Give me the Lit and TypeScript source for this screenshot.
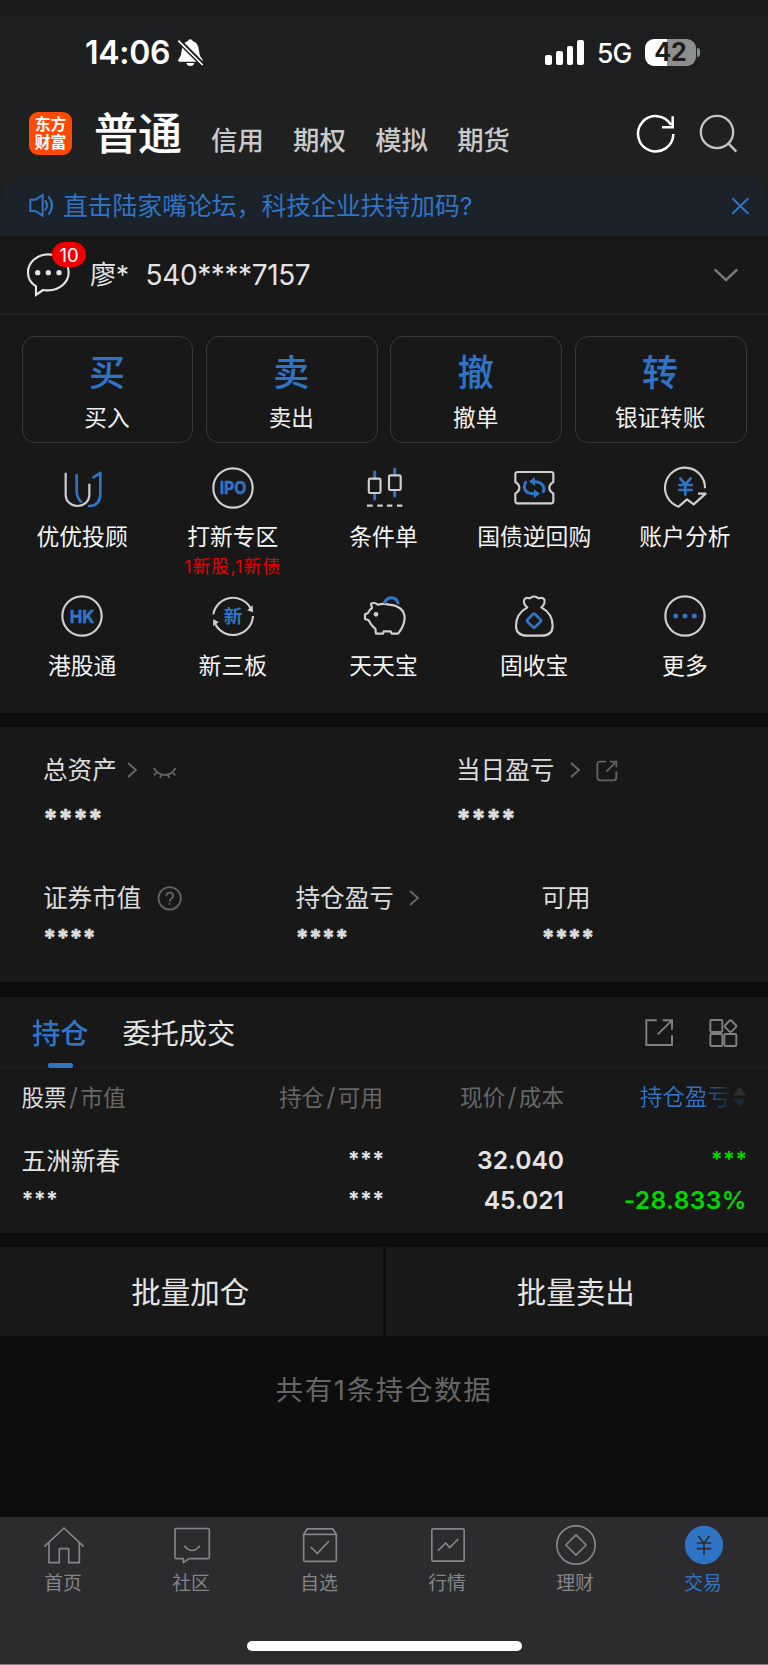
import { LitElement, html, css, svg } from "lit";
import { customElement } from "lit/decorators.js";

const ic = (size: number, body: unknown, cls = "") =>
  html`<svg class="ic ${cls}" width=${size} height=${size} viewBox="0 0 ${size * 3} ${size * 3}">${body}</svg>`;

const quick = [
  { big: "买", label: "买入" },
  { big: "卖", label: "卖出" },
  { big: "撤", label: "撤单" },
  { big: "转", label: "银证转账" },
];

const yen = svg`<path class="b" stroke-width="8" d="M61 46L76 65L92 46M58 66H95M58 81H95M76 65V95"/>`;

const tools = [
  {
    label: "优优投顾",
    icon: svg`<path class="w" d="M26 29V96a35.500 33 0 0 0 71 0V62"/><path class="b" stroke-width="8" d="M59 36V84q1 22 13 32M109 43L130 30V92q0 36-34 37"/>`,
  },
  {
    label: "打新专区",
    note: "1新股,1新债",
    icon: svg`<circle class="w" cx="75" cy="75" r="59"/><text class="t" x="75" y="94" textLength="80" lengthAdjust="spacingAndGlyphs" font-size="53">IPO</text>`,
  },
  {
    label: "条件单",
    icon: svg`<path class="b" stroke-width="9" d="M47 27V46M47 91V108M107 18V36M107 83V99"/><rect class="w" x="29.500" y="47" width="35" height="43" rx="4"/><rect class="w" x="90" y="37" width="35" height="44" rx="4"/><path class="w" d="M24 128H41M55 128H71M84 128H100M114 128H130"/>`,
  },
  {
    label: "国债逆回购",
    icon: svg`<path class="w" d="M26 27H126q7 0 7 7V57q-12 7-12 17t12 17V114q0 7-7 7H26q-7 0-7-7V91q12-7 12-17T19 57V34q0-7 7-7z"/><path class="b" stroke-width="9" d="M50 58Q41 73 51 84Q58 92 74 92M76 56Q95 56 102 68Q107 76 103 86"/><path class="f" d="M75 79L93 92L75 106zM78 42L60 55L78 69z"/>`,
  },
  {
    label: "账户分析",
    icon: svg`<path class="w" d="M135 76A60 60 0 1 0 56 131L81 109L101 124L137 92H114"/>${yen}`,
  },
  {
    label: "港股通",
    icon: svg`<circle class="w" cx="75" cy="75" r="59"/><text class="t" x="75" y="95" textLength="74" lengthAdjust="spacingAndGlyphs" font-size="54">HK</text>`,
  },
  {
    label: "新三板",
    icon: svg`<path class="w" d="M16 70A60 60 0 0 1 128 52M135 75A60 60 0 0 1 22 100"/><path class="wf" d="M134 43L135 64L118 58zM15 105L16 84L32 94z"/><text class="t thin" x="75" y="96" font-size="56">新</text>`,
  },
  {
    label: "天天宝",
    icon: svg`<path class="w" d="M36 38Q48 33 56 41Q72 36 90 41Q137 46 137 82Q135 106 117 128H98L95 121H74L72 128H51L49 113Q38 106 29 88L18 84V70L27 66Q30 57 39 51z"/><circle class="wf" cx="51" cy="70" r="7"/><path class="b" stroke-width="9" d="M77 34Q84 20 98 20Q112 20 117 36"/>`,
  },
  {
    label: "固收宝",
    icon: svg`<path class="w" d="M55 49Q41 38 46 25Q52 18 62 22Q75 11 89 22Q100 18 106 25Q110 38 97 49Q131 68 131 104Q131 134 97 134H55Q21 134 21 104Q21 68 55 49z"/><rect class="b" stroke-width="8" x="59" y="73" width="32" height="32" rx="5" transform="rotate(45 75 89)"/>`,
  },
  {
    label: "更多",
    icon: svg`<circle class="w" cx="75" cy="75" r="59"/><g class="f"><circle cx="47" cy="75" r="7.500"/><circle cx="75" cy="75" r="7.500"/><circle cx="103" cy="75" r="7.500"/></g>`,
  },
];

const nav = [
  { label: "首页", icon: svg`<path d="M1 65L60 9L119 65M15 54V113H46V71H74V113H106V54"/>` },
  { label: "社区", icon: svg`<path d="M13 10.500H108q4 0 4 4V97q0 4-4 4H51L34 113V101H13q-4 0-4-4V14.500q0-4 4-4zM37 62q23 29 47 0"/>` },
  { label: "自选", icon: svg`<path d="M22 11.500H98L109 28V105q0 4-4 4H15q-4 0-4-4V28zM11 28H109M32 66L52 85L87 48"/>` },
  { label: "行情", icon: svg`<rect x="11.500" y="11.500" width="97" height="97" rx="4"/><path d="M30 77L53 54L65 68L91 42"/>` },
  { label: "理财", icon: svg`<circle cx="60" cy="60" r="57.500"/><path d="M60 29.500L90.500 60L60 90.500L29.500 60z"/>` },
  { label: "交易", active: true, icon: svg`<circle class="disc" cx="60" cy="60" r="57.500"/><path class="dark" d="M43 33L60 55L76 33M38 54H82M38 71H82M60 55V90"/>` },
];

const chevron = html`<svg class="ic chev" width="11" height="18" viewBox="0 0 33 54"><path d="M3 6L27 27L3 48"/></svg>`;

@customElement("app-root")
export class AppRoot extends LitElement {
  static styles = css`
    :host { display: block; width: 768px; height: 1665px; overflow: hidden; background: #0d0d0d; color: #e4e4e4; font-family: Inter, "Noto Sans CJK SC", sans-serif; line-height: 1; white-space: nowrap; }
    * { box-sizing: border-box; }
    .ic { display: block; flex: none; fill: none; overflow: visible; }
    .top { height: 236px; background: linear-gradient(#1c1d1f 0, #1e1f20 90px, #212121 175px, #1b1b1b 205px); }
    .status { height: 104px; display: flex; align-items: center; padding: 0 68px 0 85px; color: #fff; }
    .time { width: 91px; font-size: 32px; font-weight: 600; letter-spacing: -0.3px; margin-top: 2px; }
    .bell { margin-top: 1px; }
    .bell path { fill: #fff; }
    .bell .cut { stroke: #1d1e20; stroke-width: 15; }
    .bell .slash { stroke: #fff; stroke-width: 5; }
    .bars { display: flex; align-items: flex-end; gap: 4px; margin: 0 13px 0 auto; }
    .bars i { width: 6.700px; border-radius: 2px; background: #fff; }
    .b1 { height: 10px; } .b2 { height: 14px; } .b3 { height: 19px; } .b4 { height: 25px; }
    .net { font-size: 26.500px; font-weight: 500; width: 48px; letter-spacing: -0.8px; margin-top: 3px; }
    .batt { width: 51px; height: 27px; border-radius: 9px; background: linear-gradient(90deg, #fff 0 43%, #8e8e8e 43%); color: #1d1e20; font-size: 25px; font-weight: 700; display: flex; align-items: center; justify-content: center; }
    .nub { width: 3px; height: 9px; margin-left: 1px; border-radius: 0 4px 4px 0; background: #8e8e8e; }
    .head { height: 71px; display: flex; align-items: flex-start; padding: 0 29px 0 29px; }
    .logo { width: 43px; height: 43px; margin-top: 8px; border-radius: 9px; background: #ff4a05; color: #fff; font-size: 15.800px; font-weight: 700; line-height: 18px; text-align: center; padding-top: 3.500px; }
    .title { margin: 8px 29px 0 22px; font-size: 44px; font-weight: 500; -webkit-text-stroke: 0.200px #fff; color: #fff; }
    .seg { font-size: 26.400px; font-weight: 500; color: #c9c9c9; margin: 23px 29.300px 0 0; }
    .acts { display: flex; gap: 23px; margin: 10px 0 0 auto; }
    .acts path, .acts circle { stroke: #fff; stroke-width: 7.500; }
    .acts .dim path, .acts .dim circle { stroke: #c4c4c4; stroke-width: 7; }
    .banner { height: 61px; border-radius: 28px 28px 0 0; background: #1c222a; color: #2f74c5; display: flex; align-items: center; padding: 0 18px 0 28.500px; font-size: 24.800px; }
    .banner span { margin: 1px auto 0 9.500px; }
    .banner path { stroke: #2f74c5; stroke-width: 6; }
    .panel { background: #181818; }
    .acct { height: 79px; border-bottom: 2px solid #232323; display: flex; align-items: center; padding: 0 30px 0 25px; }
    .chat { position: relative; width: 65px; height: 48px; }
    .chat .ic { margin-top: 1px; }
    .chat path { stroke: #e4e4e4; stroke-width: 6.500; }
    .chat circle { fill: #e4e4e4; }
    .badge { position: absolute; left: 27px; top: -8.500px; width: 34px; height: 25px; border-radius: 13px; background: #ee0000; color: #fff; font-size: 18.500px; line-height: 26px; text-align: center; }
    .who { font-size: 26px; margin-top: 1.500px; } .num { font-size: 28px; letter-spacing: -0.380px; margin: 1.500px auto 0 16.500px; }
    .down path { stroke: #777; stroke-width: 7.500; }
    .quick { display: grid; grid-template-columns: repeat(4, 1fr); gap: 12.500px; padding: 21px 21.500px 0; height: 128px; }
    .card { border: 1.500px solid #383838; border-radius: 13px; display: flex; flex-direction: column; align-items: center; padding: 18px 1px 0 0; color: #f0f0f0; font-size: 22.600px; }
    .big { font-size: 36px; font-weight: 500; -webkit-text-stroke: 0.200px #2f74c5; color: #2f74c5; margin-bottom: 15.500px; }
    .tools { display: grid; grid-template-columns: repeat(5, 1fr); grid-template-rows: 128.500px auto; padding: 19.500px 7.500px 0 7px; height: 270px; }
    .tool { display: flex; flex-direction: column; align-items: center; font-size: 22.800px; color: #f4f4f4; }
    .tool .ic { margin-bottom: 13.500px; }
    .tool > span { margin-right: 0.500px; }
    .note { color: #e60000; font-size: 17.800px; margin-top: 9px; letter-spacing: 1.150px; }
    .w { stroke: #cfcfcf; stroke-width: 6.500; stroke-linejoin: round; }
    .b { stroke: #2f74c5; stroke-linecap: round; stroke-linejoin: round; }
    .f, .t { fill: #2f74c5; } .wf { fill: #cfcfcf; }
    .t { font-weight: 700; text-anchor: middle; stroke: #2f74c5; stroke-width: 1.500; stroke-linejoin: round; }
    .t.thin { stroke: none; }
    .assets { margin-top: 14px; height: 255px; padding: 30.500px 0 0 43px; font-size: 24.600px; color: #dcdcdc; }
    .row { display: grid; }
    .r1 { grid-template-columns: 413px 1fr; height: 128px; }
    .r2 { grid-template-columns: 252.500px 246px 1fr; }
    .lab { display: flex; align-items: center; height: 26px; }
    .chev { margin-left: 10px; margin-top: -1px; }
    .gap .chev { margin-left: 15.500px; }
    .chev path { stroke: #6a6a6a; stroke-width: 5.500; }
    .gray path, .gray circle { stroke: #626262; stroke-width: 5.500; }
    .eye { margin-left: 14px; } .exp { margin-left: 15.500px; } .help { margin-left: 16px; margin-top: -1px; }
    .s1 { font-size: 26px; font-weight: 800; letter-spacing: -0.200px; margin-top: 22px; -webkit-text-stroke: 0.500px #dcdcdc; }
    .s2 { font-size: 23px; font-weight: 800; letter-spacing: -0.250px; margin-top: 15px; -webkit-text-stroke: 0.500px #dcdcdc; }
    .hold { margin-top: 15px; height: 236px; }
    .tabs { height: 71px; border-bottom: 1.500px solid #212121; display: flex; align-items: stretch; padding: 0 29.500px 0 32px; font-size: 28.200px; }
    .tab { margin-right: 34px; height: 71px; display: flex; flex-direction: column; align-items: center; justify-content: space-between; padding-top: 22.500px; }
    .tab.on { color: #2f74c5; font-weight: 500; }
    .tab i { width: 25px; height: 5px; border-radius: 2px; background: #2f74c5; }
    .tact { display: flex; gap: 34.500px; margin: 20.500px 0 0 auto; }
    .tact path, .tact rect { stroke: #808080; stroke-width: 5.800; }
    .cols { display: grid; grid-template-columns: 200px 161.500px 181px 182px; padding: 0 21.500px; align-items: center; text-align: right; }
    .cols > :first-child { text-align: left; }
    .th { height: 58px; font-size: 22.600px; color: #666; }
    .th em { font-style: normal; color: #dcdcdc; }
    .th s { text-decoration: none; margin: 0 2.300px; font-size: 25px; }
    .sort { display: flex; justify-content: flex-end; align-items: center; gap: 3px; }
    .sort span { background: linear-gradient(90deg, #2f74c5 68%, #1b2634); -webkit-background-clip: text; background-clip: text; color: transparent; }
    .td { height: 40px; font-size: 24.600px; font-weight: 600; }
    .nm { font-size: 24.700px; font-weight: 400; padding-top: 1px; }
    .st { font-size: 21.500px; font-weight: 700; letter-spacing: 0.200px; padding-bottom: 2px; }
    .st:not(:first-child) { margin-right: -1.500px; }
    .gr { color: #00d800; }
    .pct { letter-spacing: 0.350px; margin-right: -0.800px; }
    .tr { padding-top: 14.500px; }
    .batch { margin-top: 14px; display: grid; grid-template-columns: 1fr 1fr; gap: 3px; height: 89px; font-size: 29.500px; }
    .batch div { background: #181818; display: flex; align-items: center; justify-content: center; padding: 2px 2px 0 0; }
    .sum { height: 181px; padding-top: 41px; text-align: center; font-size: 27.500px; letter-spacing: 1.650px; color: #666; }
    .nav { height: 148px; background: #2c2c2e; border-bottom: 1px solid #808084; display: flex; flex-direction: column; align-items: center; }
    .items { align-self: stretch; display: grid; grid-template-columns: repeat(6, 1fr); height: 124px; padding-top: 8px; }
    .item { display: flex; flex-direction: column; align-items: center; gap: 9.500px; color: #858589; font-size: 18.800px; }
    .item > span { margin-right: 2px; }
    .item path, .item rect, .item circle { stroke: #858589; stroke-width: 5; stroke-linejoin: round; }
    .item.on { color: #2f74c5; }
    .item .disc { fill: #2f74c5; stroke: none; } .item .dark { stroke: #2c2c2e; }
    .bar { width: 275px; height: 9.500px; border-radius: 5px; background: #fff; }
  `;

  render() {
    return html`
      <div class="top">
        <div class="status">
          <span class="time">14:06</span>
          ${ic(29, svg`<path d="M43 4Q49 4 50 9Q68 15 69 38Q70 54 79 63Q82 71 76 71H9Q4 69 8 63Q16 54 17 38Q18 15 36 9Q37 4 43 4zM31 75H55Q53 84 43 84T31 75z"/><path class="cut" d="M4 4L84 84"/><path class="slash" d="M7 8L80 81"/>`, "bell")}
          <div class="bars"><i class="b1"></i><i class="b2"></i><i class="b3"></i><i class="b4"></i></div>
          <span class="net">5G</span>
          <span class="batt">42</span><span class="nub"></span>
        </div>
        <div class="head">
          <div class="logo">东方<br />财富</div>
          <div class="title">普通</div>
          ${["信用", "期权", "模拟", "期货"].map((t) => html`<div class="seg">${t}</div>`)}
          <div class="acts">
            ${ic(40, svg`<path d="M112 60A53 53 0 1 1 105 33M110 7V40H78"/>`)}
            ${ic(40, svg`<circle cx="54" cy="54" r="48.500"/><path d="M88 88L112 113"/>`, "dim")}
          </div>
        </div>
        <div class="banner">
          ${ic(25, svg`<path d="M4 20H19L41 6V68L19 54H4zM48 22Q60 37 48 52M58 10Q80 37 58 65"/>`)}
          <span>直击陆家嘴论坛，科技企业扶持加码?</span>
          ${ic(20, svg`<path d="M7 7L55 53M55 7L7 53"/>`)}
        </div>
      </div>
      <div class="panel">
        <div class="acct">
          <div class="chat">
            ${ic(48, svg`<path d="M33 103Q9 88 9 62A61 54 0 1 1 70 115Q62 116 54 114L33 129z"/><circle cx="38" cy="62" r="8"/><circle cx="70" cy="62" r="8"/><circle cx="102" cy="62" r="8"/>`)}
            <span class="badge">10</span>
          </div>
          <span class="who">廖*</span><span class="num">540****7157</span>
          ${ic(24, svg`<path d="M2 19L36 51L70 19"/>`, "down")}
        </div>
        <div class="quick">
          ${quick.map((q) => html`<div class="card"><span class="big">${q.big}</span><span>${q.label}</span></div>`)}
        </div>
        <div class="tools">
          ${tools.map((t) => html`<div class="tool">${ic(50, t.icon)}<span>${t.label}</span>${t.note ? html`<span class="note">${t.note}</span>` : ""}</div>`)}
        </div>
      </div>
      <div class="panel assets">
        <div class="row r1">
          <div>
            <div class="lab">总资产${chevron}${ic(25, svg`<path d="M5 30Q17 50 38 51Q60 51 71 30M14 43L6 52M28 50L24 60M48 50L52 60M62 43L70 52"/>`, "gray eye")}</div>
            <div class="s1">****</div>
          </div>
          <div>
            <div class="lab gap">当日盈亏${chevron}${ic(22, svg`<path d="M30 5H12Q4 5 4 13V52Q4 61 12 61H52Q61 61 61 52V34M42 5H61V22M61 5L31 35"/>`, "gray exp")}</div>
            <div class="s1">****</div>
          </div>
        </div>
        <div class="row r2">
          <div>
            <div class="lab">证券市值${ic(25, svg`<circle cx="38" cy="37" r="33.500"/><path d="M28 31Q28 20 38 20T48 30Q48 35 43 38Q38 41 38 47M38 51V56"/>`, "gray help")}</div>
            <div class="s2">****</div>
          </div>
          <div>
            <div class="lab gap">持仓盈亏${chevron}</div>
            <div class="s2">****</div>
          </div>
          <div>
            <div class="lab">可用</div>
            <div class="s2">****</div>
          </div>
        </div>
      </div>
      <div class="panel hold">
        <div class="tabs">
          <div class="tab on">持仓<i></i></div>
          <div class="tab">委托成交</div>
          <div class="tact">
            ${ic(30, svg`<path d="M38 7H7V81H84V52M56 7H84V35M84 7L41 49"/>`)}
            ${ic(30, svg`<rect x="4" y="6" width="36" height="36" rx="4"/><rect x="4" y="48" width="36" height="36" rx="4"/><rect x="46" y="48" width="36" height="36" rx="4"/><rect x="51" y="11" width="27" height="27" rx="4" transform="rotate(45 64.500 24.500)"/>`)}
          </div>
        </div>
        <div class="cols th">
          <div><em>股票</em><s>/</s>市值</div>
          <div>持仓<s>/</s>可用</div>
          <div>现价<s>/</s>成本</div>
          <div class="sort"><span>持仓盈亏</span><svg class="ic" width="13" height="20" viewBox="0 0 13 20"><path fill="#2f2f2f" d="M6.500 0L13 8.500H0z" /><path fill="#1b2838" d="M6.500 20L13 11.500H0z" /></svg></div>
        </div>
        <div class="tr">
          <div class="cols td"><div class="nm">五洲新春</div><div class="st">***</div><div>32.040</div><div class="st gr">***</div></div>
          <div class="cols td"><div class="st">***</div><div class="st">***</div><div>45.021</div><div class="gr pct">-28.833%</div></div>
        </div>
      </div>
      <div class="batch"><div>批量加仓</div><div>批量卖出</div></div>
      <div class="sum">共有1条持仓数据</div>
      <div class="nav">
        <div class="items">
          ${nav.map((n) => html`<div class="item ${n.active ? "on" : ""}">${ic(40, n.icon)}<span>${n.label}</span></div>`)}
        </div>
        <div class="bar"></div>
      </div>
    `;
  }
}
